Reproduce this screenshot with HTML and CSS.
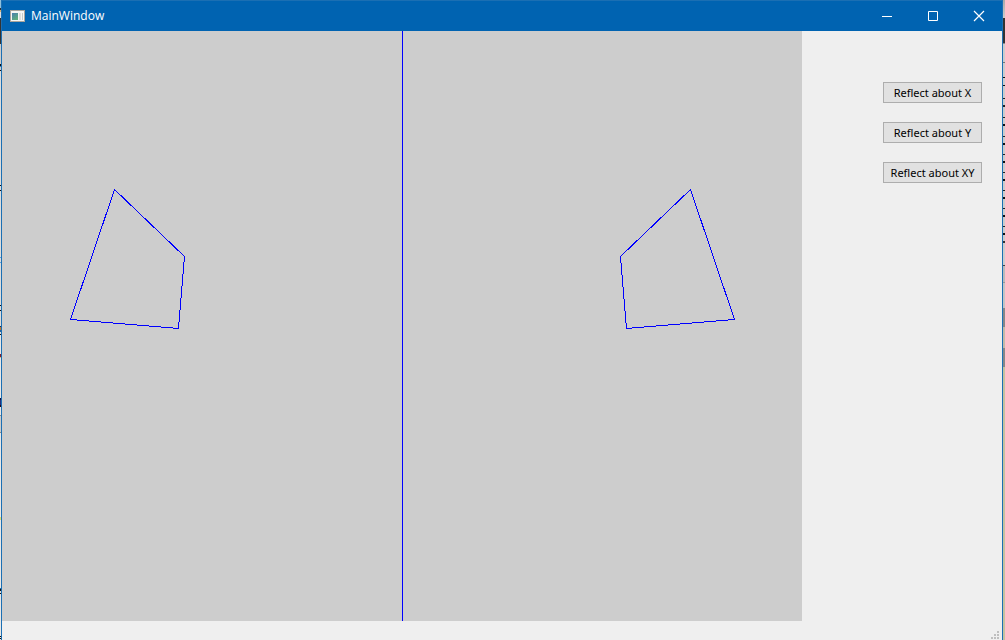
FILE: index.html
```html
<!DOCTYPE html>
<html lang="en">
<head>
<meta charset="utf-8">
<title>MainWindow</title>
<link rel="stylesheet" href="styles.css">
</head>
<body>
<div class="desktop">
  <div class="edge-left"></div>
  <div class="window">
    <header class="titlebar">
      <svg class="app-icon" width="16" height="14" viewBox="0 0 16 14" shape-rendering="crispEdges" aria-hidden="true">
        <defs>
          <linearGradient id="pane" x1="0" y1="0" x2="0.6" y2="1">
            <stop offset="0" stop-color="#4a7fb0"/>
            <stop offset="1" stop-color="#5fae7c"/>
          </linearGradient>
        </defs>
        <rect x="0" y="1" width="15" height="12" fill="#aaa59c"/>
        <rect x="1" y="2" width="13" height="10" fill="#f6f6f4"/>
        <rect x="2" y="4" width="6" height="7" fill="url(#pane)"/>
        <rect x="9" y="4" width="2" height="7" fill="#dcdedc"/>
        <rect x="12" y="4" width="1" height="7" fill="#c6cac6"/>
      </svg>
      <h1 class="title">MainWindow</h1>
      <button class="caption-button" type="button" aria-label="Minimize">
        <svg width="12" height="12" viewBox="0 0 12 12"><path d="M1 6.500H11" stroke="#fff"/></svg>
      </button>
      <button class="caption-button" type="button" aria-label="Maximize">
        <svg width="12" height="12" viewBox="0 0 12 12"><path d="M1.500 1.500H10.500V10.500H1.500Z" fill="none" stroke="#fff"/></svg>
      </button>
      <button class="caption-button" type="button" aria-label="Close">
        <svg width="12" height="12" viewBox="0 0 12 12"><path d="M1 1L11 11M11 1L1 11" stroke="#fff" stroke-width="1.200"/></svg>
      </button>
    </header>
    <main class="content">
      <div class="canvas">
        <svg class="drawing" width="800" height="590" viewBox="0 0 800 590" shape-rendering="crispEdges" role="img" aria-label="Polygon and its reflection">
          <g fill="none" stroke="#0000ff">
            <path d="M400.500 0V590"/>
            <path d="M112.500 158.500L182.500 225.500L176.500 297.500L68.500 288.500Z"/>
            <path d="M688.500 158.500L618.500 225.500L624.500 297.500L732.500 288.500Z"/>
          </g>
        </svg>
      </div>
      <div class="actions">
        <button class="action" type="button">Reflect about X</button>
        <button class="action" type="button">Reflect about Y</button>
        <button class="action" type="button">Reflect about XY</button>
      </div>
    </main>
    <footer class="statusbar">
      <svg width="8" height="8" viewBox="0 0 8 8" shape-rendering="crispEdges" aria-hidden="true">
        <path fill="#bfbfbf" d="M6 0h2v2h-2zM3 3h2v2h-2zM6 3h2v2h-2zM0 6h2v2h-2zM3 6h2v2h-2zM6 6h2v2h-2z"/>
      </svg>
    </footer>
  </div>
  <div class="edge-right"></div>
</div>
</body>
</html>
```
FILE: styles.css
```css
* {
  box-sizing: border-box;
}

body {
  margin: 0;
  font-family: "Open Sans", "Noto Sans", sans-serif;
}

.desktop {
  display: grid;
  grid-template-columns: 1px 1fr 2px;
  min-height: 100vh;
}

/* Slivers of the windows behind this one */
.edge-left {
  background: linear-gradient(#8fc0dc 0 8px, #333 8px 10px, #d8b070 10px 12px, #ddd 12px 18px, #333 18px 44px,
    #ccc 44px 64px, #111 64px 66px, #3a80c0 66px 67px, #ccc 67px 70px, #111 70px 71px,
    #ddd 71px 185px, #111 185px 186px, #ddd 186px 190px, #111 190px 191px,
    #ddd 191px 257px, #5aa0e0 257px 258px, #ddd 258px 262px, #5aa0e0 262px 263px,
    #ddd 263px 305px, #111 305px 306px, #ddd 306px 310px, #111 310px 311px,
    #ddd 311px 326px, #123060 326px 327px, #c07830 327px 330px, #2060a0 330px 332px, #ddd 332px 334px, #111 334px 335px,
    #e8e8e8 335px 354px, #802030 354px 357px, #d8c080 357px 358px,
    #e8e8e8 358px 398px, #101040 398px 400px, #203080 400px 405px, #200818 405px 407px,
    #e8e8e8 407px 415px, #888 415px 416px, #ccc 416px 432px, #888 432px 433px,
    #e8e8e8 433px 517px, #e0e070 517px 520px, #e8e8e8 520px 588px, #2070b0 588px 589px, #111 589px 591px,
    #ddd 591px 593px, #111 593px 594px, #e8e8e8 594px 636px, #111 636px 637px, #e8e8e8 637px 638px, #111 638px 639px, #e8e8e8 639px);
}

.edge-right {
  background:
    linear-gradient(transparent 0 98px, #222 98px 99px, transparent 99px 105px, #222 105px 107px, transparent 107px) 0 0 / 2px 100% no-repeat,
    linear-gradient(#aaa 0, #ccc 18px, #333 18px 43px, #888 43px 44px, #ccc 44px 62px, #777 62px 63px, #ccc 63px 77px,
    #111 77px 78px, #ccc 78px 85px, #111 85px 86px, #ccc 86px 117px, #222 117px 118px, #ccc 118px 124px, #111 124px 126px,
    #ccc 126px 136px, #222 136px 137px, #ccc 137px 143px, #111 143px 145px,
    #ccc 145px 154px, #222 154px 155px, #ccc 155px 161px, #111 161px 163px,
    #ccc 163px 172px, #222 172px 173px, #ccc 173px 179px, #111 179px 181px,
    #ccc 181px 190px, #222 190px 191px, #ccc 191px 197px, #111 197px 199px,
    #ccc 199px 208px, #222 208px 209px, #ccc 209px 215px, #111 215px 217px,
    #ccc 217px 226px, #222 226px 227px, #ccc 227px 233px, #111 233px 235px,
    #ccc 235px 241px, #333 241px 243px, #ccc 243px 265px, #444 265px 266px, #bbb 266px 282px, #999 282px 283px,
    #c4c4c4 283px 308px, #888 308px 327px, #c4baa8 327px 348px, #888 348px 367px, #c4c2a0 367px);
}

.window {
  display: flex;
  flex-direction: column;
  min-width: 0;
  border: 1px solid #1b6fb3;
  border-bottom: 0;
  background: #efefef;
}

.titlebar {
  display: flex;
  align-items: center;
  height: 30px;
  padding-left: 8px;
  background: #0063b1;
  color: #fff;
}

.title {
  flex: 1;
  margin: 0 0 0 5px;
  font-size: 12px;
  font-weight: 400;
  line-height: 16px;
}

.caption-button {
  display: flex;
  align-items: center;
  justify-content: center;
  width: 46px;
  height: 28px;
  padding: 0;
  border: 0;
  background: transparent;
}

.content {
  display: flex;
  flex: 1;
}

.canvas {
  flex: 1;
  min-width: 0;
  background: #cdcdcd;
}

.drawing {
  display: block;
}

.actions {
  display: flex;
  flex-direction: column;
  align-items: flex-end;
  gap: 19px;
  width: 200px;
  padding: 51px 20px 0 0;
}

.action {
  width: 99px;
  height: 21px;
  padding: 0;
  border: 1px solid #adadad;
  background: #e1e1e1;
  color: #000;
  font-family: "Noto Sans", "Open Sans", sans-serif;
  font-size: 11px;
  line-height: 16px;
}

.statusbar {
  display: flex;
  align-items: flex-end;
  justify-content: flex-end;
  height: 19px;
  padding: 0 3px 1px 0;
}
```
